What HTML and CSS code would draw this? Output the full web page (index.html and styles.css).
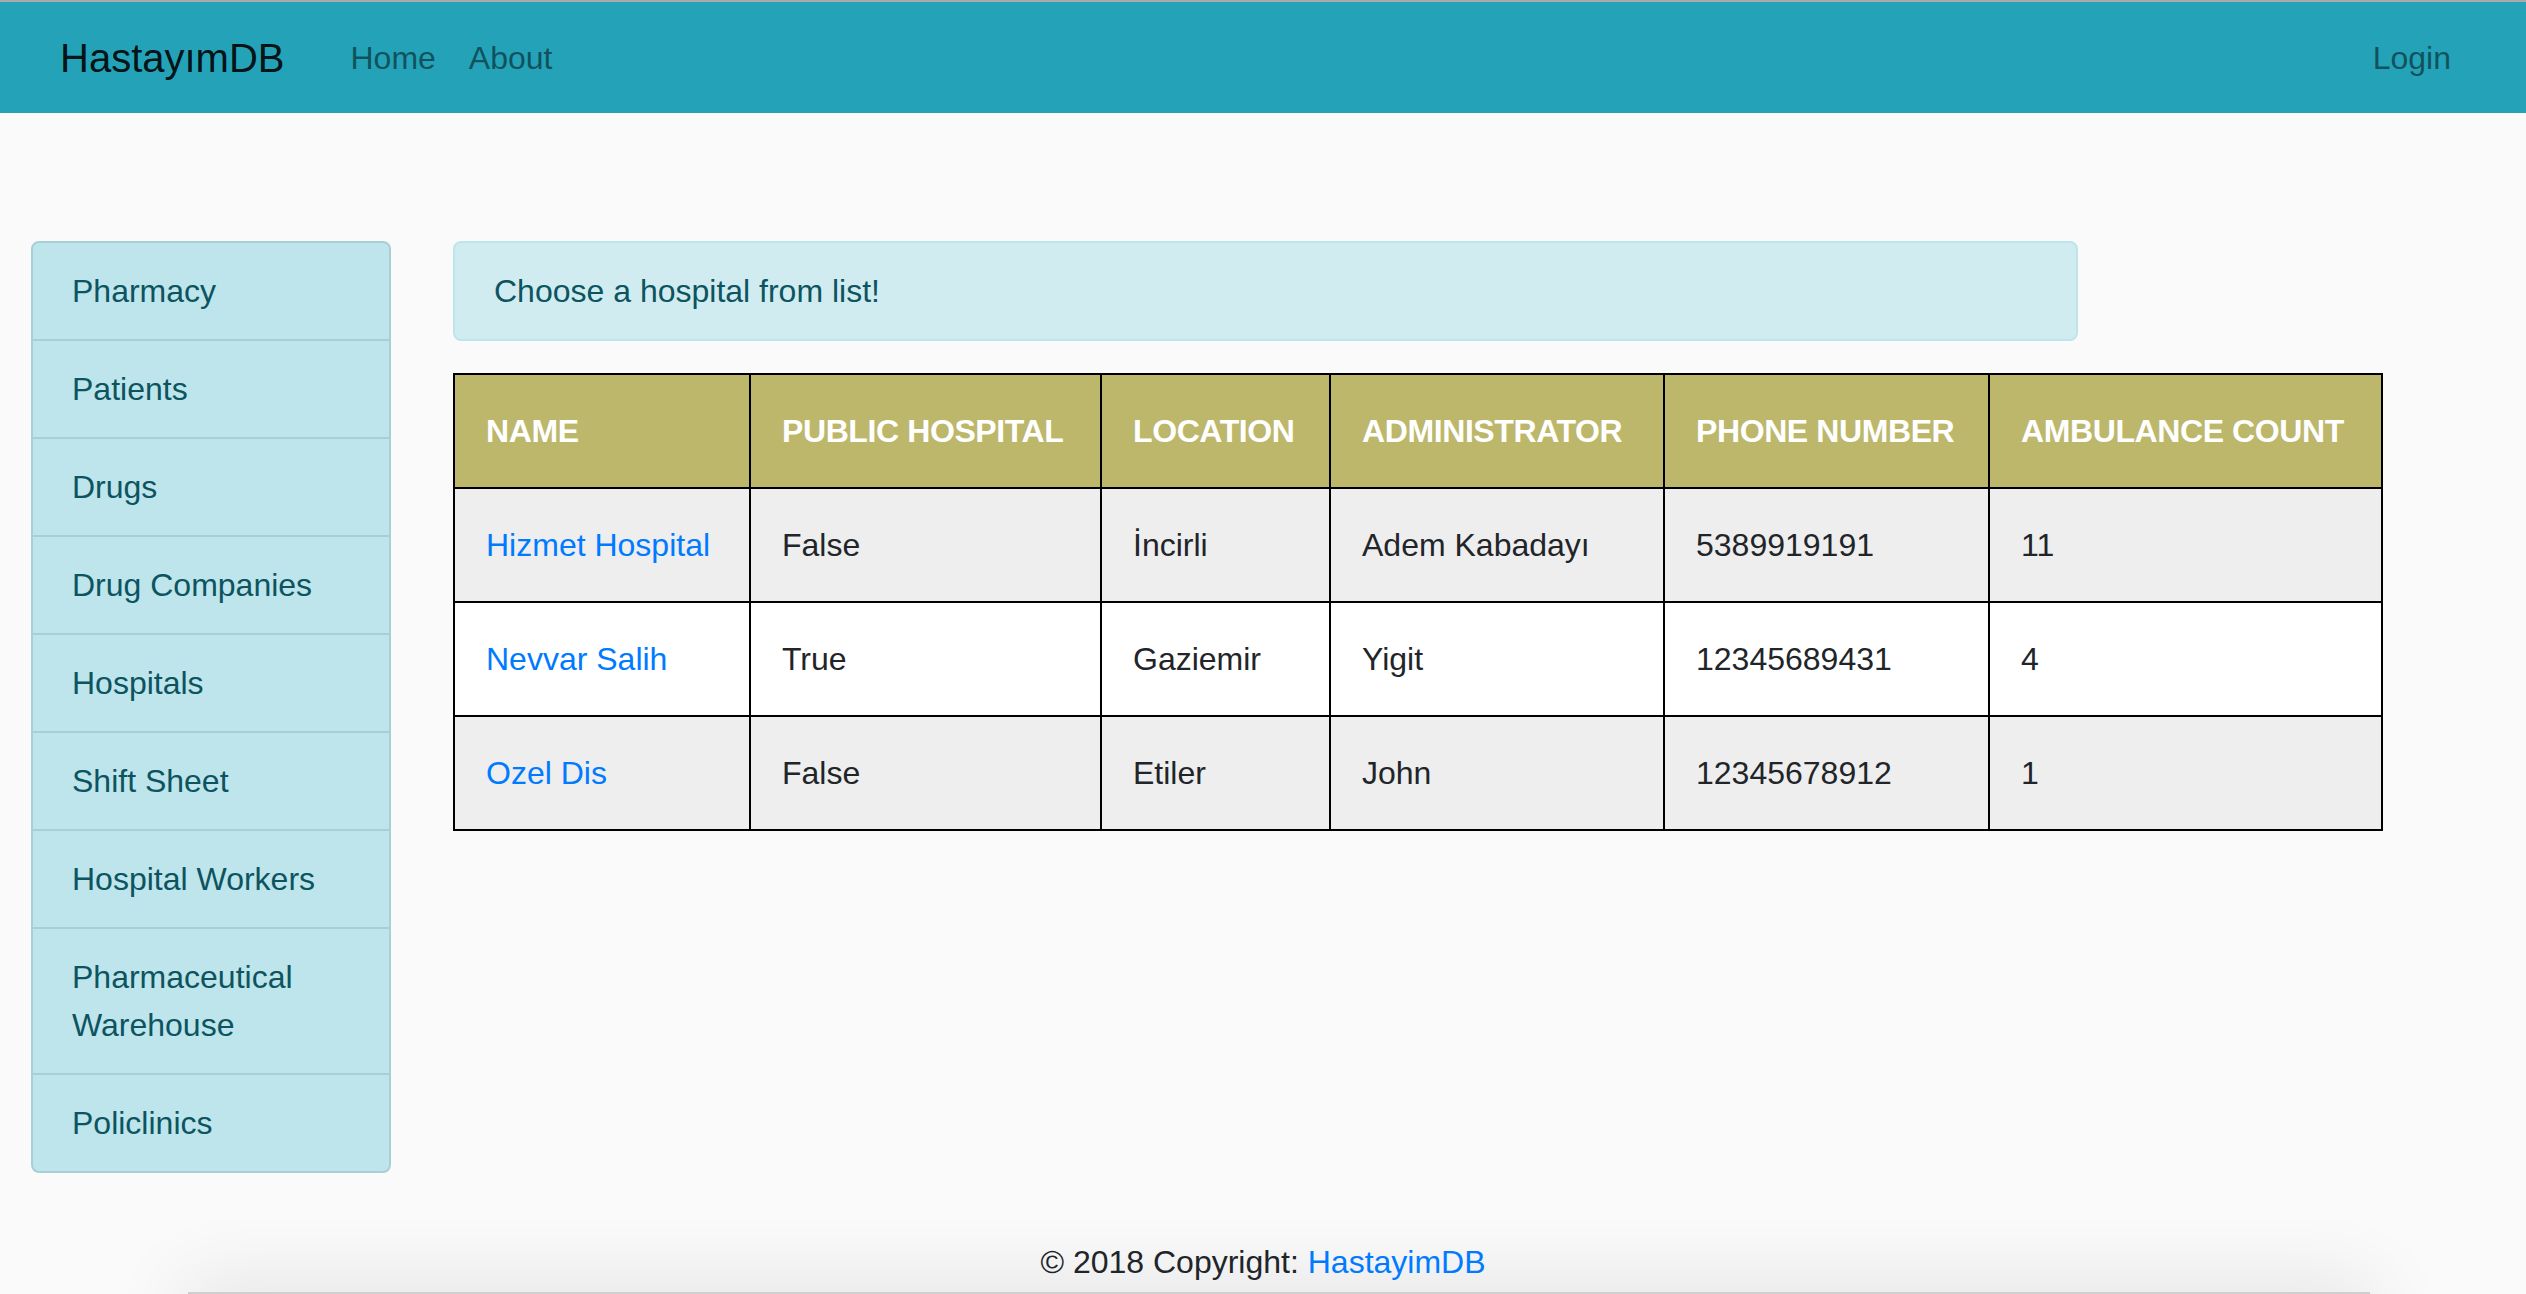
FILE: index.html
```html
<!DOCTYPE html>
<html lang="en">
<head>
<meta charset="utf-8">
<title>HastayımDB</title>
<link rel="stylesheet" href="styles.css">
</head>
<body>
<nav class="navbar">
  <a class="brand" href="#">HastayımDB</a>
  <ul class="nav">
    <li><a class="nav-link" href="#">Home</a></li>
    <li><a class="nav-link" href="#">About</a></li>
  </ul>
  <ul class="nav nav-right">
    <li><a class="nav-link" href="#">Login</a></li>
  </ul>
</nav>

<main class="layout">
  <aside class="sidebar">
    <a href="#">Pharmacy</a>
    <a href="#">Patients</a>
    <a href="#">Drugs</a>
    <a href="#">Drug Companies</a>
    <a href="#">Hospitals</a>
    <a href="#">Shift Sheet</a>
    <a href="#">Hospital Workers</a>
    <a href="#">Pharmaceutical Warehouse</a>
    <a href="#">Policlinics</a>
  </aside>

  <section class="content">
    <div class="alert">Choose a hospital from list!</div>
    <table class="hospitals">
      <thead>
        <tr>
          <th class="col-name">Name</th>
          <th class="col-public">Public Hospital</th>
          <th class="col-location">Location</th>
          <th class="col-admin">Administrator</th>
          <th class="col-phone">Phone Number</th>
          <th class="col-ambulance">Ambulance Count</th>
        </tr>
      </thead>
      <tbody>
        <tr>
          <td><a href="#">Hizmet Hospital</a></td>
          <td>False</td>
          <td>İncirli</td>
          <td>Adem Kabadayı</td>
          <td>5389919191</td>
          <td>11</td>
        </tr>
        <tr>
          <td><a href="#">Nevvar Salih</a></td>
          <td>True</td>
          <td>Gaziemir</td>
          <td>Yigit</td>
          <td>12345689431</td>
          <td>4</td>
        </tr>
        <tr>
          <td><a href="#">Ozel Dis</a></td>
          <td>False</td>
          <td>Etiler</td>
          <td>John</td>
          <td>12345678912</td>
          <td>1</td>
        </tr>
      </tbody>
    </table>
  </section>
</main>

<footer class="footer">
  <p class="copyright">© 2018 Copyright: <a href="#">HastayimDB</a></p>
  <div class="footer-edge"></div>
</footer>
</body>
</html>
```

FILE: styles.css
```css
html, body {
  margin: 0;
  height: 100%;
  overflow: hidden;
}

body {
  box-sizing: border-box;
  border-top: 2px solid #a9a9a9;
  background: #fafafa;
  color: #212529;
  font-family: "Liberation Sans", Arial, sans-serif;
  font-size: 32px;
  line-height: 1.5;
}

a {
  text-decoration: none;
}

/* Navbar */
.navbar {
  display: flex;
  align-items: center;
  height: 111px;
  padding: 0 59px 0 60px;
  background: #23a2b8;
}

.brand {
  font-size: 40px;
  color: rgba(0, 0, 0, 0.9);
  margin-right: 50px;
}

.nav {
  display: flex;
  margin: 0;
  padding: 0;
  list-style: none;
}

.nav-right {
  margin-left: auto;
}

.nav-link {
  display: block;
  padding: 0 17px 0 16px;
  color: rgba(0, 0, 0, 0.5);
}

.nav-right .nav-link {
  padding: 0 16px;
}

/* Layout */
.layout {
  display: flex;
  align-items: flex-start;
  gap: 62px;
  padding: 128px 0 0 31px;
}

.sidebar {
  display: flex;
  flex-direction: column;
  flex: none;
  width: 360px;
  box-sizing: border-box;
  border: 2px solid #a8cfd5;
  border-radius: 8px;
  background: #bee5eb;
  overflow: hidden;
}

.sidebar a {
  padding: 24px 39px;
  color: #0c5460;
  border-top: 2px solid #a8cfd5;
}

.sidebar a:first-child {
  border-top: none;
}

.content {
  display: flex;
  flex-direction: column;
  align-items: flex-start;
}

.alert {
  width: 1625px;
  box-sizing: border-box;
  padding: 24px 39px;
  margin-bottom: 32px;
  border: 2px solid #bee5eb;
  border-radius: 8px;
  background: #d1ecf1;
  color: #0c5460;
}

/* Table */
.hospitals {
  border-collapse: collapse;
}

.hospitals th,
.hospitals td {
  border: 2px solid #000;
  padding: 32px 32px 32px 31px;
  text-align: left;
  white-space: nowrap;
}

.hospitals th {
  background: #bdb76b;
  color: #fff;
  font-weight: bold;
  text-transform: uppercase;
  letter-spacing: -0.4px;
}

.hospitals .col-name { width: 231px; }
.hospitals .col-public { width: 286px; }
.hospitals .col-location { width: 164px; }
.hospitals .col-admin { width: 269px; }
.hospitals .col-phone { width: 260px; }
.hospitals .col-ambulance { width: 328px; }

.hospitals tbody tr:nth-child(odd) td {
  background: #eeeeee;
}

.hospitals tbody tr:nth-child(even) td {
  background: #fff;
}

.hospitals a {
  color: #007bff;
}

/* Footer */
.footer {
  margin-top: 65px;
}

.copyright {
  margin: 0;
  text-align: center;
}

.copyright a {
  color: #007bff;
}

.footer-edge {
  height: 40px;
  margin: 6px 156px 0 188px;
  border-top: 2px solid #cfcfcf;
  background: #e4e4e4;
  box-shadow: 0 0 80px 4px rgba(0, 0, 0, 0.12);
}
```
